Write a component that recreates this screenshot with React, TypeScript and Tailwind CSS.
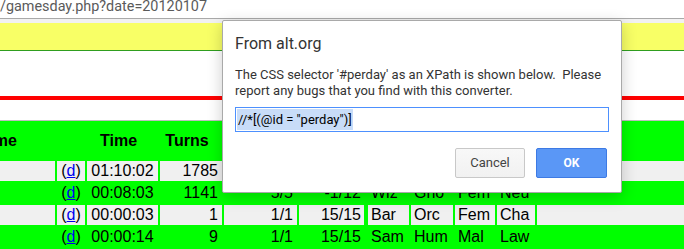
import React from "react";

type Row = { bg: string; cells: string[] };

const rows: Row[] = [
  { bg: "bg-[#f0f0f0]", cells: ["", "d", "01:10:02", "1785", "1/1", "3/3", "", "Val", "Dwa", "Fem", "Law", ""] },
  { bg: "bg-transparent", cells: ["", "d", "00:08:03", "1141", "5/5", "-1/12", "", "Wiz", "Gno", "Fem", "Neu", ""] },
  { bg: "bg-[#f0f0f0]", cells: ["", "d", "00:00:03", "1", "1/1", "15/15", "", "Bar", "Orc", "Fem", "Cha", ""] },
  { bg: "bg-transparent", cells: ["", "d", "00:00:14", "9", "1/1", "15/15", "", "Sam", "Hum", "Mal", "Law", ""] },
];

const align = [
  "text-left pl-[3px]",
  "text-center",
  "text-center",
  "text-right pr-[4px]",
  "text-right pr-[4px]",
  "text-right pr-[3px]",
  "",
  "text-left pl-[3px]",
  "text-left pl-[3px]",
  "text-left pl-[3px]",
  "text-left pl-[3px]",
  "text-left pl-[3px]",
];

export default function App() {
  return (
    <div className="relative w-[684px] h-[249px] overflow-hidden bg-white">
      {/* address text */}
      <div className="h-[18px] overflow-hidden">
        <div className="-mt-[2px] font-['Roboto',Arial,sans-serif] text-[14.4px] leading-[17px] text-[#5a5a5a] whitespace-nowrap">
          /gamesday.php?date=20120107
        </div>
      </div>
      <div className="h-[1px] bg-[#a9a9a9]" />
      <div className="h-[4px] bg-[#f1f1f1]" />
      {/* yellow band */}
      <div className="h-[27px] bg-[#f8ff66]" />
      <div className="h-[1px] bg-[#2f9e1f]" />
      <div className="h-[45px] bg-white" />
      <div className="h-[4px] bg-[#ff0000]" />
      <div className="h-[20px] bg-white" />
      <div className="h-[1px] bg-[#bdbdbd]" />

      {/* table */}
      <div className="bg-[#00ff00] h-[128px] overflow-hidden">
        <div className="-ml-[65px] w-[749px] pt-[2px] grid grid-cols-[120px_28px_71px_62px_73px_65px_0px_41px_42px_40px_38px_1fr] gap-x-[2px] gap-y-[2px] font-['Liberation_Sans',Arial,sans-serif] text-[16px] leading-[20px] text-black">
          <div className="h-[36px] flex items-center justify-center font-bold">Name</div>
          <div className="h-[36px]" />
          <div className="h-[36px] flex items-center justify-center font-bold pr-[8px]">Time</div>
          <div className="h-[36px] flex items-center justify-center font-bold pr-[8px]">Turns</div>
          <div className="h-[36px] flex items-center justify-center font-bold">HP</div>
          <div className="h-[36px] flex items-center justify-center font-bold">Pw</div>
          <div className="h-[36px]" />
          <div className="h-[36px] flex items-center justify-center font-bold">Role</div>
          <div className="h-[36px] flex items-center justify-center font-bold">Race</div>
          <div className="h-[36px] flex items-center justify-center font-bold">G</div>
          <div className="h-[36px] flex items-center justify-center font-bold">Al</div>
          <div className="h-[36px]" />
          {rows.map((r, ri) =>
            r.cells.map((c, ci) => (
              <div
                key={`${ri}-${ci}`}
                className={`h-[20px] whitespace-nowrap overflow-hidden ${ci === 6 ? "" : r.bg} ${align[ci]}`}
              >
                {ci === 1 ? (
                  <span>
                    (<span className="text-[#0000ee] underline">d</span>)
                  </span>
                ) : (
                  c
                )}
              </div>
            ))
          )}
        </div>
      </div>

      {/* dialog */}
      <div className="absolute left-[222px] top-[20px] w-[400px] bg-white border border-[#a9a9a9] rounded-[2px] shadow-[0_4px_16px_rgba(0,0,0,0.2)] px-[12px] pt-[13px] pb-[14px] font-['Roboto',Arial,sans-serif]">
        <div className="text-[16px] leading-[19px] text-[#333333]">From alt.org</div>
        <p className="mt-[14px] text-[13px] leading-[16px] text-[#333333] whitespace-pre-wrap">
          {"The CSS selector '#perday' as an XPath is shown below.  Please report any bugs that you find with this converter."}
        </p>
        <div className="mt-[8px] h-[25px] border border-[#4d90fe] flex items-center pl-[1px]">
          <span className="bg-[#c8dcf8] text-[13px] leading-[21px] text-black px-[1px] whitespace-pre">
            {'//*[(@id = "perday")]'}
          </span>
        </div>
        <div className="mt-[16px] flex justify-end gap-[11px] pr-[2px]">
          <button className="w-[70px] h-[30px] rounded-[2px] border border-[#c8c8c8] bg-gradient-to-b from-[#f8f8f8] to-[#f1f1f1] text-[13px] text-[#444444] flex items-center justify-center">
            Cancel
          </button>
          <button className="w-[71px] h-[30px] rounded-[2px] border border-[#3d7ae4] bg-[#5a97f6] text-[12px] font-bold text-white flex items-center justify-center">
            OK
          </button>
        </div>
      </div>
    </div>
  );
}
